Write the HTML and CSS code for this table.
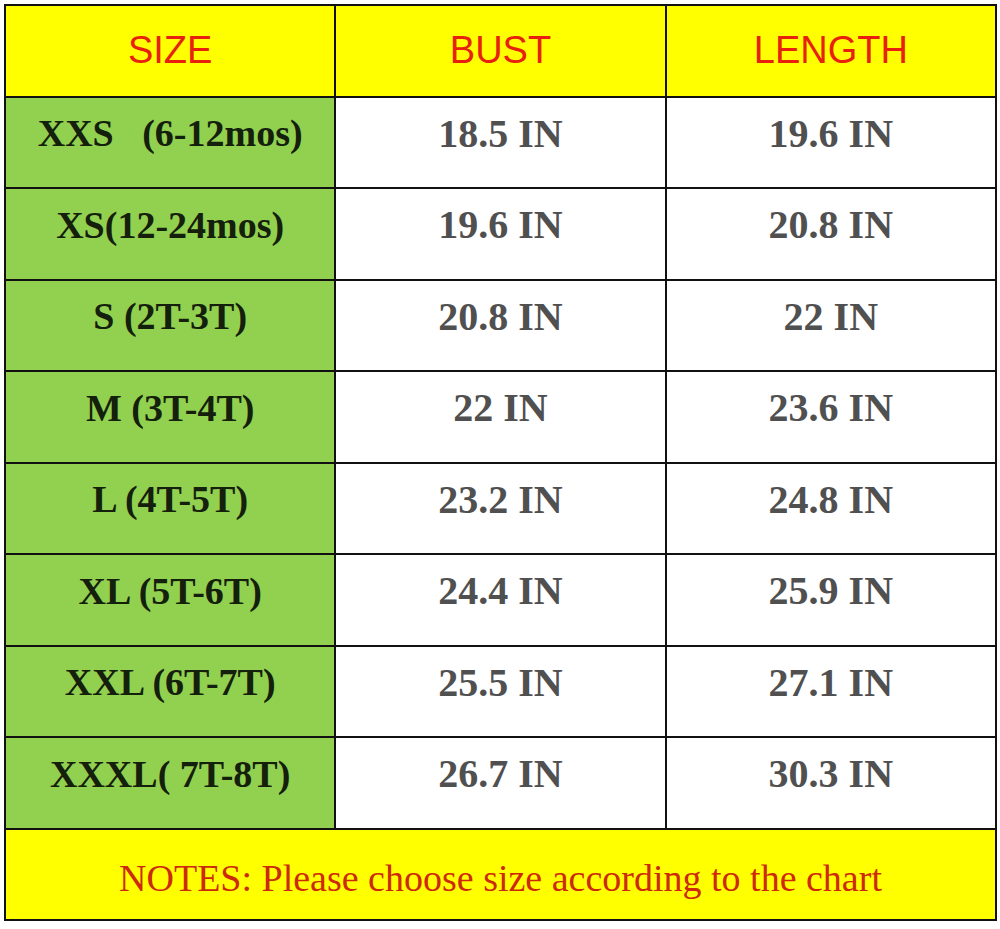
FILE: index.html
```html
<!DOCTYPE html>
<html>
<head>
<meta charset="utf-8">
<link rel="stylesheet" href="styles.css">
</head>
<body>
<div class="chart">
  <div class="cell head">SIZE</div>
  <div class="cell head">BUST</div>
  <div class="cell head">LENGTH</div>

  <div class="cell size">XXS&nbsp;&nbsp;&nbsp;(6-12mos)</div>
  <div class="cell val">18.5 IN</div>
  <div class="cell val">19.6 IN</div>

  <div class="cell size">XS(12-24mos)</div>
  <div class="cell val">19.6 IN</div>
  <div class="cell val">20.8 IN</div>

  <div class="cell size">S (2T-3T)</div>
  <div class="cell val">20.8 IN</div>
  <div class="cell val">22 IN</div>

  <div class="cell size">M (3T-4T)</div>
  <div class="cell val">22 IN</div>
  <div class="cell val">23.6 IN</div>

  <div class="cell size">L (4T-5T)</div>
  <div class="cell val">23.2 IN</div>
  <div class="cell val">24.8 IN</div>

  <div class="cell size">XL (5T-6T)</div>
  <div class="cell val">24.4 IN</div>
  <div class="cell val">25.9 IN</div>

  <div class="cell size">XXL (6T-7T)</div>
  <div class="cell val">25.5 IN</div>
  <div class="cell val">27.1 IN</div>

  <div class="cell size">XXXL( 7T-8T)</div>
  <div class="cell val">26.7 IN</div>
  <div class="cell val">30.3 IN</div>

  <div class="cell notes">NOTES: Please choose size according to the chart</div>
</div>
</body>
</html>
```

FILE: styles.css
```css
html, body {
  margin: 0;
  padding: 0;
  background: #ffffff;
}

.chart {
  margin: 4px 0 0 4px;
  width: 993px;
  height: 917px;
  box-sizing: border-box;
  background: #111111;
  padding: 2px;
  display: grid;
  grid-template-columns: 1fr 1fr 1fr;
  grid-template-rows: repeat(10, 1fr);
  gap: 2px;
}

.cell {
  display: flex;
  align-items: center;
  justify-content: center;
  white-space: pre;
  box-sizing: border-box;
}

.head {
  background: #ffff00;
  color: #e8210e;
  font-family: "Liberation Sans", Arial, sans-serif;
  font-size: 38px;
}

.size {
  background: #92d050;
  color: #14200c;
  font-family: "Liberation Serif", "Times New Roman", serif;
  font-weight: bold;
  font-size: 38px;
  padding-bottom: 18px;
}

.val {
  background: #ffffff;
  color: #505050;
  font-family: "Liberation Serif", "Times New Roman", serif;
  font-weight: bold;
  font-size: 40px;
  padding-bottom: 18px;
}

.notes {
  grid-column: 1 / 4;
  background: #ffff00;
  color: #cc2a0a;
  font-family: "Liberation Serif", "Times New Roman", serif;
  font-size: 38px;
  padding-top: 8px;
}
```
